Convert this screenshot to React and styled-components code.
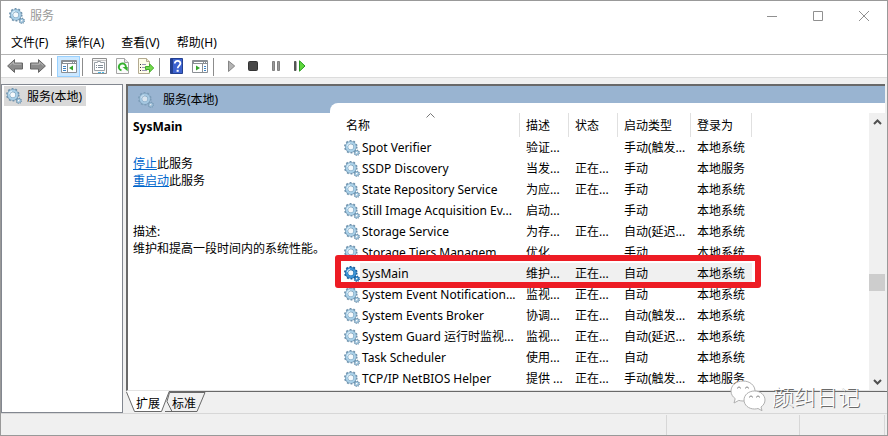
import React, { useState } from 'react'
import styled, { createGlobalStyle } from 'styled-components'

const services = [
  { name: 'Spot Verifier', desc: '验证...', status: '', start: '手动(触发...', logon: '本地系统' },
  { name: 'SSDP Discovery', desc: '当发...', status: '正在...', start: '手动', logon: '本地服务' },
  { name: 'State Repository Service', desc: '为应...', status: '正在...', start: '手动', logon: '本地系统' },
  { name: 'Still Image Acquisition Ev...', desc: '启动...', status: '', start: '手动', logon: '本地系统' },
  { name: 'Storage Service', desc: '为存...', status: '正在...', start: '自动(延迟...', logon: '本地系统' },
  { name: 'Storage Tiers Managem...', desc: '优化...', status: '', start: '手动', logon: '本地系统' },
  { name: 'SysMain', desc: '维护...', status: '正在...', start: '自动', logon: '本地系统' },
  { name: 'System Event Notification...', desc: '监视...', status: '正在...', start: '自动', logon: '本地系统' },
  { name: 'System Events Broker', desc: '协调...', status: '正在...', start: '自动(触发...', logon: '本地系统' },
  { name: 'System Guard 运行时监视...', desc: '监视...', status: '正在...', start: '自动(延迟...', logon: '本地系统' },
  { name: 'Task Scheduler', desc: '使用...', status: '正在...', start: '自动', logon: '本地系统' },
  { name: 'TCP/IP NetBIOS Helper', desc: '提供 ...', status: '正在...', start: '手动(触发...', logon: '本地服务' },
]
const menus = ['文件(F)', '操作(A)', '查看(V)', '帮助(H)']

const GearIcon = ({ selected, faded }) => {
  const fill = selected ? '#3f95d6' : '#a9d0e8'
  const edge = selected ? '#17609f' : '#6f93ae'
  return (
    <Icon viewBox="0 0 16 16" $faded={faded}>
      <circle cx="6.8" cy="6.8" r="5.7" fill="none" stroke={edge} strokeWidth="2.2" strokeDasharray="1.79 1.79" />
      <circle cx="6.8" cy="6.8" r="4.2" fill="#f4f9fc" stroke={edge} strokeWidth="3.2" />
      <circle cx="6.8" cy="6.8" r="4.1" fill="none" stroke={fill} strokeWidth="2.2" />
      <path d="M3 6.2a3.9 3.9 0 0 1 3.2-3.2" fill="none" stroke="#e2f2fb" strokeWidth="1" />
      <circle cx="12.8" cy="12.8" r="2.5" fill="none" stroke={edge} strokeWidth="1.4" strokeDasharray="1 .96" />
      <circle cx="12.8" cy="12.8" r="1.7" fill="#fff" stroke={edge} strokeWidth="1.5" />
      <circle cx="12.8" cy="12.8" r="1.5" fill="none" stroke={fill} strokeWidth="1" />
    </Icon>
  )
}
const ArrowIcon = ({ forward }) => (
  <Icon viewBox="0 0 16 16">
    <g transform={forward ? 'translate(16 0) scale(-1 1)' : undefined}>
      <path d="M.6 8 7.5 1.6V5h8v6h-8v3.4z" fill="#8b8b8b" stroke="#666" />
      <path d="M2.6 7.6 6.6 4v2.2h7.8" fill="none" stroke="#b9b9b9" />
    </g>
  </Icon>
)
const WindowPaneIcon = ({ right }) => (
  <Icon viewBox="0 0 16 16">
    <path d="M.5 2.5h15v12H.5z" fill="#fff" stroke="#8a8f94" />
    <path d="M1 3h14v3H1z" fill="#8a8f94" />
    <path d="M2 4.5h9M12 4.5h1M14 4.5h1" stroke="#fff" />
    <path d={right ? 'M10.5 6v8' : 'M6.5 6v8'} stroke="#8a8f94" />
    <path d={right ? 'M12 8.5h2M12 10.5h2M12 12.5h2' : 'M2 8.5h3M2 10.5h3M2 12.5h3'} stroke="#3c84c6" />
    <path d={right ? 'M4 7.5v5l4-2.5z' : 'M12 7.5v5L8 10z'} fill="#35a52b" />
  </Icon>
)
const PropertiesIcon = () => (
  <Icon viewBox="0 0 16 16">
    <path d="M.5.5h14v15H.5z" fill="#f7f7f7" stroke="#8f8f8f" />
    <path d="M1 2.5h13" stroke="#c4c4c4" />
    <path d="M2.5 4.5h3v-1h3v1h4v8h-10z" fill="#fff" stroke="#9aa1a7" />
    <path d="M4 7.500h1M4 9.500h1M6 7.500h5M6 9.500h5" stroke="#7f8b95" />
    <path d="M6 14.500h3M10 14.500h2" stroke="#48b8e6" />
  </Icon>
)
const RefreshIcon = () => (
  <Icon viewBox="0 0 16 16">
    <path d="M1.5.5h8l4 4v11h-12z" fill="#fbfbfb" stroke="#a5a5a5" />
    <path d="M9.5.5v4h4" fill="#e8e8e8" stroke="#a5a5a5" />
    <path d="M6.500 12.400A3.500 3.500 0 1 1 10.800 9.600" fill="none" stroke="#35b02f" strokeWidth="2" />
    <path d="M7.500 9h5.200v4.200z" fill="#35b02f" />
  </Icon>
)
const ExportIcon = () => (
  <Icon viewBox="0 0 16 16">
    <path d="M.5.5h8l3 3v12H.5z" fill="#fffdea" stroke="#b3aa90" />
    <path d="M8.5.5v3h3" fill="#eee5c6" stroke="#b3aa90" />
    <path d="M2 6.5h1M2 9.5h1M2 12.5h1" stroke="#333" />
    <path d="M4 6.5h4M4 9.5h4M4 12.5h5" stroke="#9a95b4" />
    <path d="M7.5 8.5h4v-2.700l4.200 4.200-4.200 4.200v-2.700h-4z" fill="#75d94d" stroke="#43ad2a" />
  </Icon>
)
const HelpIcon = () => (
  <Icon viewBox="0 0 16 16">
    <path d="M1.5.5h12v15h-12z" fill="#3c62cf" stroke="#24408f" />
    <path d="M2 1h2v14H2z" fill="#24408f" />
    <path d="M5.800 5.500c0-3.600 5.600-3.400 5.600 0 0 2-2.700 2.200-2.700 4.800" fill="none" stroke="#fff" strokeWidth="1.8" />
    <path d="M7.600 11.800h2.100v2H7.600z" fill="#fff" />
  </Icon>
)
const PlayIcon = () => (
  <Icon viewBox="0 0 16 16">
    <path d="M5.500 3v10.500L11.700 8z" fill="#b4b4b4" stroke="#858585" />
  </Icon>
)
const StopIcon = () => (
  <Icon viewBox="0 0 16 16">
    <rect x="2.5" y="3.5" width="9" height="9" rx="1" fill="#484848" stroke="#333" />
  </Icon>
)
const PauseIcon = () => (
  <Icon viewBox="0 0 16 16">
    <path d="M3.500 3.500h2v9h-2zM8.500 3.500h2v9h-2z" fill="#999" stroke="#808080" />
  </Icon>
)
const RestartIcon = () => (
  <Icon viewBox="0 0 16 16">
    <path d="M2.5 3.5h1.500v9H2.500z" fill="#555" stroke="#555" />
    <path d="M7.500 2.800v10.400L13 8z" fill="#5fd83d" stroke="#279a20" />
  </Icon>
)

const toolGroups = [
  [
    { label: '后退', icon: <ArrowIcon /> },
    { label: '前进', icon: <ArrowIcon forward /> },
  ],
  [{ label: '显示/隐藏控制台树', icon: <WindowPaneIcon />, active: true }],
  [
    { label: '属性', icon: <PropertiesIcon /> },
    { label: '刷新', icon: <RefreshIcon /> },
    { label: '导出列表', icon: <ExportIcon /> },
  ],
  [
    { label: '帮助', icon: <HelpIcon /> },
    { label: '显示/隐藏操作窗格', icon: <WindowPaneIcon right /> },
  ],
  [
    { label: '启动服务', icon: <PlayIcon /> },
    { label: '停止服务', icon: <StopIcon /> },
    { label: '暂停服务', icon: <PauseIcon /> },
    { label: '重新启动服务', icon: <RestartIcon /> },
  ],
]

const TitleBar = () => (
  <TitleRow>
    <GearIcon />
    <Title>服务</Title>
    <WindowButton aria-label="最小化">
      <CaptionIcon viewBox="0 0 10 10">
        <path d="M0 5.5h10" />
      </CaptionIcon>
    </WindowButton>
    <WindowButton aria-label="最大化">
      <CaptionIcon viewBox="0 0 10 10">
        <path d="M.5.5h9v9h-9z" />
      </CaptionIcon>
    </WindowButton>
    <WindowButton aria-label="关闭">
      <CaptionIcon viewBox="0 0 10 10">
        <path d="m0 0 10 10M10 0 0 10" />
      </CaptionIcon>
    </WindowButton>
  </TitleRow>
)

const ServiceTable = ({ selected, onSelect }) => (
  <Table>
    <colgroup>
      <Col $width={178} />
      <Col $width={49} />
      <Col $width={49} />
      <Col $width={73} />
      <Col $width={61} />
    </colgroup>
    <thead>
      <tr>
        <HeadCell $name>
          名称
          <SortMark viewBox="0 0 9 5">
            <path d="m.5 4.5 4-4 4 4" />
          </SortMark>
        </HeadCell>
        <HeadCell>描述</HeadCell>
        <HeadCell>状态</HeadCell>
        <HeadCell>启动类型</HeadCell>
        <HeadCell>登录为</HeadCell>
      </tr>
    </thead>
    <tbody>
      {services.map((s) => {
        const active = s.name === selected
        return (
          <Row key={s.name} onClick={() => onSelect(s.name)}>
            <NameCell>
              <NameInner>
                <GearIcon selected={active} />
                <NameText $active={active}>{s.name}</NameText>
              </NameInner>
              {active && <Highlight />}
            </NameCell>
            <Cell $active={active}>{s.desc}</Cell>
            <Cell $active={active}>{s.status}</Cell>
            <Cell $active={active}>{s.start}</Cell>
            <Cell $active={active}>{s.logon}</Cell>
          </Row>
        )
      })}
    </tbody>
  </Table>
)

const App = () => {
  const [selected, setSelected] = useState('SysMain')
  return (
    <>
      <GlobalStyle />
      <Window>
        <TitleBar />
        <MenuBar>
          {menus.map((m) => (
            <MenuButton key={m}>{m}</MenuButton>
          ))}
        </MenuBar>
        <Toolbar>
          {toolGroups.map((group) => (
            <ToolGroup key={group[0].label}>
              {group.map((t) => (
                <ToolButton key={t.label} aria-label={t.label} $active={t.active}>
                  {t.icon}
                </ToolButton>
              ))}
            </ToolGroup>
          ))}
        </Toolbar>
        <Body>
          <Tree>
            <TreeItem>
              <GearIcon />
              服务(本地)
            </TreeItem>
          </Tree>
          <Main>
            <Content>
              <Side>
                <PaneTitle>
                  <GearIcon faded />
                  服务(本地)
                </PaneTitle>
                <Details>
                  <ServiceName>{selected}</ServiceName>
                  <Actions>
                    <p>
                      <ActionLink href="#stop">停止</ActionLink>此服务
                    </p>
                    <p>
                      <ActionLink href="#restart">重启动</ActionLink>此服务
                    </p>
                  </Actions>
                  <p>描述:</p>
                  <p>维护和提高一段时间内的系统性能。</p>
                </Details>
              </Side>
              <List>
                <TableArea>
                  <ServiceTable selected={selected} onSelect={setSelected} />
                </TableArea>
                <ScrollBar>
                  <ScrollButton aria-label="向上滚动">
                    <ScrollArrow viewBox="0 0 9 6">
                      <path d="m1 5 3.5-3.5L8 5" />
                    </ScrollArrow>
                  </ScrollButton>
                  <ScrollSpace $grow={144} />
                  <ScrollThumb />
                  <ScrollSpace $grow={82} />
                  <ScrollButton aria-label="向下滚动">
                    <ScrollArrow viewBox="0 0 9 6">
                      <path d="M1 1l3.5 3.5L8 1" />
                    </ScrollArrow>
                  </ScrollButton>
                </ScrollBar>
              </List>
            </Content>
            <Tabs>
              <TabShapes viewBox="0 0 80 21">
                <path d="M39 20.500H46L41 10.500 43.500 1.500H79L71 20.500H45" fill="#f0f0f0" stroke="#696969" />
                <path d="M0 0H43L35.500 20.500H9z" fill="#fff" />
                <path d="M.5 1 8.500 20.500H35.500L43 1" fill="none" stroke="#696969" />
              </TabShapes>
              <Tab>扩展</Tab>
              <Tab>标准</Tab>
            </Tabs>
          </Main>
        </Body>
        <StatusBar>
          <StatusField />
          <StatusField $width={133} />
          <StatusField $width={85} />
        </StatusBar>
        <Watermark>
          <WatermarkLogo viewBox="0 0 36 32">
            <path
              d="M13 1C6 1 1 5.500 1 11c0 3.200 1.600 5.800 4.200 7.600L4 23l4.800-2.600c1.300.4 2.700.6 4.200.6 7 0 12-4.500 12-10S20 1 13 1z"
            />
            <path
              d="M24.500 11C18.500 11 14 15 14 20s4.500 9 10.500 9c1.200 0 2.400-.2 3.500-.5l4 2.200-1-3.700c2.500-1.700 4-4.200 4-7 0-5-4.500-9-10.500-9z"
            />
            <g className="eyes">
              <path d="M7.500 8.500a1.500 1.500 0 0 1 3 0M15.500 8.500a1.500 1.500 0 0 1 3 0M19.500 17.500a1.500 1.500 0 0 1 3 0M26.500 17.500a1.500 1.500 0 0 1 3 0" />
            </g>
          </WatermarkLogo>
          颜纠日记
        </Watermark>
      </Window>
    </>
  )
}

const GlobalStyle = createGlobalStyle`
  * {
    box-sizing: border-box;
  }
  body {
    margin: 0;
    font-family: 'Noto Sans', 'Noto Sans CJK SC', sans-serif;
    font-size: 12px;
    line-height: 17px;
    color: #000;
  }
  p {
    margin: 0;
  }
  button {
    border: 0;
    padding: 0;
    background: none;
    font: inherit;
    color: inherit;
  }
`
const Window = styled.div`
  position: relative;
  display: flex;
  flex-direction: column;
  min-height: 100vh;
  border: 1px solid #999;
  background: #f0f0f0;
`
const Icon = styled.svg`
  display: block;
  flex: none;
  width: 16px;
  height: 16px;
  opacity: ${({ $faded }) => ($faded ? 0.7 : 1)};
`
const TitleRow = styled.header`
  display: flex;
  align-items: center;
  height: 29px;
  padding-left: 8px;
  background: #fff;
`
const Title = styled.span`
  flex: 1;
  margin-left: 5px;
  color: #999;
`
const WindowButton = styled.button`
  display: flex;
  align-items: center;
  justify-content: center;
  width: 46px;
  height: 29px;
`
const CaptionIcon = styled.svg`
  width: 10px;
  height: 10px;
  fill: none;
  stroke: #909090;
`
const MenuBar = styled.nav`
  display: flex;
  gap: 1px;
  height: 25px;
  padding-left: 2px;
  border-bottom: 1px solid #b4b4b4;
  background: #fff;
`
const MenuButton = styled.button`
  padding: 0 8px;
`
const Toolbar = styled.div`
  display: flex;
  align-items: center;
  height: 23px;
  padding-left: 2px;
  border-bottom: 1px solid #dcdcdc;
  background: #fff;
`
const ToolGroup = styled.div`
  display: flex;
  & + &::before {
    content: '';
    width: 1px;
    height: 18px;
    margin: 2px 5px 0 2px;
    background: #8c8c8c;
  }
`
const ToolButton = styled.button`
  display: flex;
  align-items: center;
  justify-content: center;
  width: 23px;
  height: 21px;
  border: 1px solid ${({ $active }) => ($active ? '#99d1ff' : 'transparent')};
  background: ${({ $active }) => ($active ? '#cce8ff' : 'transparent')};
`
const Body = styled.div`
  display: flex;
  flex: 1;
  gap: 3px;
  padding-top: 6px;
`
const Tree = styled.aside`
  width: 122px;
  padding: 1px 2px;
  border: 1px solid #828790;
  background: #fff;
`
const TreeItem = styled.button`
  display: flex;
  align-items: center;
  gap: 5px;
  height: 20px;
  padding: 0 4px 0 2px;
  background: #d9d9d9;
`
const Main = styled.main`
  display: flex;
  flex: 1;
  flex-direction: column;
  min-width: 0;
`
const Content = styled.section`
  display: flex;
  flex: 1;
  margin-right: 2px;
  border-top: 2px solid #696969;
  border-left: 2px solid #696969;
  border-bottom: 1px solid #e3e3e3;
  background: #99b4d1;
`
const Side = styled.div`
  display: flex;
  flex-direction: column;
  width: 202px;
`
const PaneTitle = styled.div`
  display: flex;
  align-items: center;
  gap: 9px;
  height: 27px;
  padding-left: 10px;
`
const Details = styled.div`
  flex: 1;
  padding: 5px;
  background: #fff;
`
const ServiceName = styled.h1`
  margin: 0 0 20px;
  font-size: 12px;
  line-height: 17px;
`
const Actions = styled.div`
  margin-bottom: 34px;
`
const ActionLink = styled.a`
  color: #0066cc;
`
const List = styled.div`
  display: flex;
  flex: 1;
  min-width: 0;
  margin-top: 17px;
  padding: 10px 0 0 12px;
  border-top-left-radius: 8px;
  background: #fff;
`
const TableArea = styled.div`
  flex: 1;
  min-width: 0;
`
const Table = styled.table`
  width: 410px;
  table-layout: fixed;
  border-collapse: separate;
  border-spacing: 0;
`
const Col = styled.col`
  width: ${({ $width }) => $width}px;
`
const HeadCell = styled.th`
  position: relative;
  height: 24px;
  padding: 0 0 0 ${({ $name }) => ($name ? 4 : 6)}px;
  border-right: 1px solid #e0e0e0;
  font-weight: 400;
  text-align: left;
`
const SortMark = styled.svg`
  position: absolute;
  top: 0;
  left: 0;
  right: 0;
  width: 9px;
  height: 5px;
  margin: 0 auto;
  fill: none;
  stroke: #777;
`
const Row = styled.tr`
  height: 21px;
`
const Cell = styled.td`
  padding: 0 0 0 6px;
  background: ${({ $active }) => ($active ? '#f0f0f0' : 'transparent')};
  white-space: nowrap;
`
const NameCell = styled.td`
  position: relative;
  padding: 0 0 0 2px;
`
const NameInner = styled.div`
  display: flex;
  align-items: center;
`
const NameText = styled.span`
  flex: 1;
  padding-left: 2px;
  line-height: 21px;
  background: ${({ $active }) => ($active ? '#f0f0f0' : 'transparent')};
  white-space: nowrap;
`
const Highlight = styled.div`
  position: absolute;
  z-index: 1;
  top: -8px;
  left: -7px;
  width: 426px;
  height: 33px;
  border: 6px solid #ed1c24;
  border-radius: 3px;
  pointer-events: none;
`
const ScrollBar = styled.div`
  display: flex;
  flex-direction: column;
  width: 16px;
  background: #f0f0f0;
`
const ScrollButton = styled.button`
  display: flex;
  align-items: center;
  justify-content: center;
  height: 17px;
`
const ScrollArrow = styled.svg`
  width: 9px;
  height: 6px;
  fill: none;
  stroke: #505050;
  stroke-width: 2;
`
const ScrollSpace = styled.div`
  flex: ${({ $grow }) => $grow};
`
const ScrollThumb = styled.div`
  height: 17px;
  background: #cdcdcd;
`
const Tabs = styled.div`
  position: relative;
  display: flex;
  gap: 12px;
  height: 22px;
  padding: 1px 0 0 10px;
  border-top: 1px solid #696969;
`
const TabShapes = styled.svg`
  position: absolute;
  top: -1px;
  left: 0;
  width: 80px;
  height: 21px;
`
const Tab = styled.button`
  position: relative;
`
const StatusBar = styled.footer`
  display: flex;
  height: 22px;
  padding: 1px 2px 0 0;
  border-top: 1px solid #d7d7d7;
`
const StatusField = styled.div`
  flex: ${({ $width }) => ($width ? `0 0 ${$width}px` : 1)};
  border-right: 1px solid #d7d7d7;
`
const Watermark = styled.div`
  position: absolute;
  right: 27px;
  bottom: 23px;
  display: flex;
  align-items: center;
  gap: 6px;
  font-size: 22px;
  font-weight: 300;
  line-height: 32px;
  color: #fff;
  text-shadow: 1px 1px 0 #6a6a6a;
`
const WatermarkLogo = styled.svg`
  width: 36px;
  height: 32px;
  fill: #fff;
  stroke: #b0b0b0;
  .eyes {
    fill: none;
    stroke: #888;
  }
`

export default App
